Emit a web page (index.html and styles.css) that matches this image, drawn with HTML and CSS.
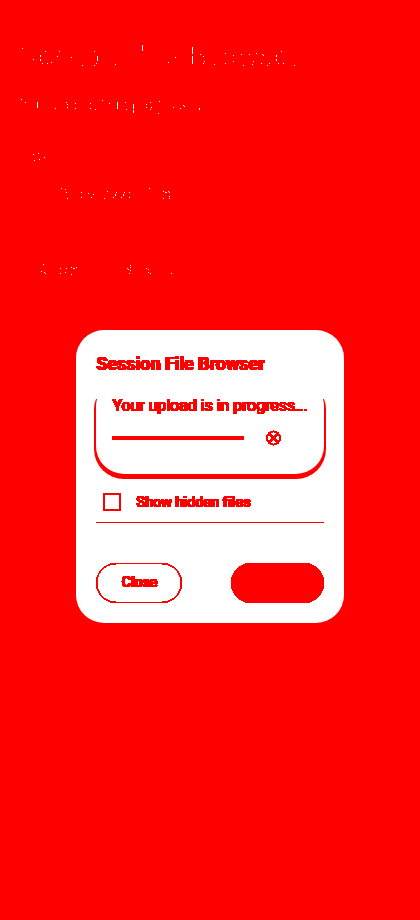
FILE: index.html
```html
<!DOCTYPE html>
<html lang="en">
<head>
<meta charset="utf-8">
<title>Session File Browser</title>
<link rel="stylesheet" href="styles.css">
</head>
<body>
<svg class="specks" width="420" height="920" viewBox="0 0 420 920" aria-hidden="true">
<defs><filter id="hard" x="-5%" y="-20%" width="110%" height="140%"><feComponentTransfer><feFuncA type="linear" slope="255" intercept="-4"/></feComponentTransfer></filter></defs>
<path d="M22.5 48v1M45.5 51v1M59.5 51v1M33.5 59v1M40.5 55v2M40.5 59v2M57.5 56v1M42.5 63v1M47.5 63v1M51.5 62v1M71.5 57v1M82.5 65v1M94.5 51v1M97.5 56v5M96.5 63v1M94.5 65v1M115.5 64v1M142.5 45v6M168.5 62v1M175.5 57v1M192.5 47v7M192.5 56v8M200.5 54v1M203.5 56v1M204.5 61v1M203.5 63v1M214.5 64v1M225.5 53v1M225.5 63v1M233.5 55v1M233.5 61v1M241.5 54v1M243.5 65v1M249.5 54v1M252.5 64v1M253.5 61v1M256.5 53v1M262.5 54v1M263.5 55v1M261.5 63v1M267.5 65v1M269.5 63v1M276.5 55v2M276.5 59v2M278.5 63v1M281.5 51v1M283.5 63v1M294.5 65v1"/>
<path d="M21.5 99v1M25.5 102v1M37.5 102v6M55.5 108v1M66.5 102v1M67.5 104v1M67.5 107v1M75.5 103v1M75.5 108v1M90.5 103v1M90.5 108v1M95.5 109v1M102.5 100v1M109.5 103v1M117.5 102v7M125.5 102v1M126.5 109v1M133.5 104v5M133.5 110v3M146.5 104v1M146.5 107v1M150.5 102v1M151.5 107v1M150.5 109v1M159.5 101v1M158.5 113v1M173.5 107v1M180.5 108v1M183.5 105v1M184.5 106v1M199.5 108v2"/>
<path d="M33.5 154v1M38.5 153v1M44.5 157v1M34.5 160v1M39.5 159v1M61.5 188v1M65.5 189v1M66.5 192v1M67.5 198v1M81.5 192v1M81.5 197v1M88.5 193v1M93.5 194v1M91.5 197v1M104.5 198v1M107.5 191v1M113.5 197v1M115.5 194v2M116.5 192v1M121.5 197v1M123.5 194v2M124.5 192v1M129.5 192v1M129.5 197v1M149.5 188v1M163.5 191v1M165.5 192v1M166.5 192v1M168.5 191v1M169.5 192v1M169.5 196v1M163.5 198v1M169.5 198v1"/>
<path d="M43.5 264v1M41.5 271v1M44.5 272v1M45.5 273v1M60.5 268v1M60.5 273v1M66.5 268v1M65.5 272v1M71.5 267v1M71.5 274v1M73.5 268v1M74.5 268v1M76.5 267v1M127.5 268v1M128.5 269v1M130.5 265v1M130.5 267v1M130.5 270v1M129.5 273v1M146.5 268v1M148.5 269v1M148.5 272v1M150.5 273v1M171.5 273v1"/>
</svg>
<main class="dialog">
  <h1 class="title hard">Session File Browser</h1>
  <section class="upload">
    <p class="message hard">Your upload is in progress...</p>
    <div class="progress">
      <div class="track"></div>
      <svg class="cancel" width="16" height="16" viewBox="0 0 16 16" shape-rendering="crispEdges"><circle cx="7.5" cy="8" r="6.6"/><path d="M3.5 4l8 8M11.5 4l-8 8"/></svg>
    </div>
  </section>
  <label class="hidden-files"><span class="box"></span><span class="hard">Show hidden files</span></label>
  <div class="actions">
    <button class="button hard">Close</button>
    <button class="button filled hard" aria-label="Select"></button>
  </div>
</main>
</body>
</html>
```
FILE: styles.css
```css
* { box-sizing: border-box; }
body {
  margin: 0;
  height: 920px;
  padding-top: 330px;
  background: #f00;
  color: #f00;
  font-family: Roboto, sans-serif;
  overflow: hidden;
}
.specks { position: absolute; left: 0; top: 0; }
.specks path { stroke: #fff; stroke-width: 1; shape-rendering: crispEdges; }
.hard { filter: url(#hard); text-shadow: 1px 0 #f00; }
.dialog {
  position: relative;
  width: 268px;
  height: 293px;
  margin: 0 auto;
  padding: 22px 20px 20px;
  border-radius: 28px;
  background: #fff;
}
.title { margin: 0; font-size: 18px; font-weight: 600; line-height: 24px; letter-spacing: -0.02px; white-space: nowrap; }
.upload {
  height: 92px;
  margin-top: 6px;
  padding: 14px 16px;
  border-radius: 24px 24px 28px 28px;
  background: #fff;
  box-shadow: 0 3px 0 2px #f00;
  clip-path: inset(17px -4px -6px -4px);
}
.message { margin: 0; font-size: 16px; font-weight: 400; line-height: 20px; letter-spacing: -0.07px; white-space: nowrap; }
.progress { display: flex; align-items: center; height: 16px; margin-top: 14px; }
.track { width: 132px; height: 4px; margin-right: 22px; background: #f00; }
.cancel { fill: none; stroke: #f00; stroke-width: 2; }
.cancel path { stroke-width: 2.2; }
.hidden-files {
  display: flex;
  align-items: center;
  height: 49px;
  padding: 7px 7px 0;
  gap: 15px;
  border-bottom: 1px solid #f00;
  font-size: 14px;
  font-weight: 500;
  letter-spacing: 0.2px;
  white-space: nowrap;
}
.box { width: 18px; height: 18px; border: 2px solid #f00; }
.actions { display: flex; justify-content: space-between; margin-top: 40px; }
.button {
  width: 86px;
  height: 40px;
  padding: 0 0 2px;
  border: 1px solid #f00;
  border-radius: 20px;
  background: transparent;
  color: #f00;
  font: 500 14px/20px Roboto, sans-serif;
}
.filled { width: 93px; background: #f00; }
```
